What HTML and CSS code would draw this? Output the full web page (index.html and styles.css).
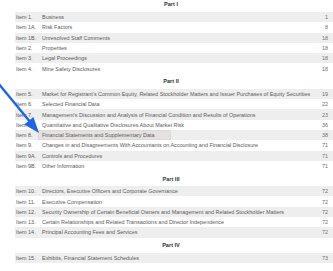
FILE: index.html
```html
<!DOCTYPE html>
<html>
<head>
<meta charset="utf-8">
<link rel="stylesheet" href="styles.css">
</head>
<body>
<div class="toc">
  <div class="part part-first">Part I</div>
  <div class="row odd"><span class="num">Item 1.</span><span class="title">Business</span><span class="page">1</span></div>
  <div class="row"><span class="num">Item 1A.</span><span class="title">Risk Factors</span><span class="page">8</span></div>
  <div class="row odd"><span class="num">Item 1B.</span><span class="title">Unresolved Staff Comments</span><span class="page">18</span></div>
  <div class="row"><span class="num">Item 2.</span><span class="title">Properties</span><span class="page">18</span></div>
  <div class="row odd"><span class="num">Item 3.</span><span class="title">Legal Proceedings</span><span class="page">18</span></div>
  <div class="row"><span class="num">Item 4.</span><span class="title">Mine Safety Disclosures</span><span class="page">18</span></div>

  <div class="part">Part II</div>
  <div class="row odd"><span class="num">Item 5.</span><span class="title">Market for Registrant’s Common Equity, Related Stockholder Matters and Issuer Purchases of Equity Securities</span><span class="page">19</span></div>
  <div class="row"><span class="num">Item 6.</span><span class="title">Selected Financial Data</span><span class="page">22</span></div>
  <div class="row odd"><span class="num">Item 7.</span><span class="title">Management’s Discussion and Analysis of Financial Condition and Results of Operations</span><span class="page">23</span></div>
  <div class="row"><span class="num">Item 7A.</span><span class="title">Quantitative and Qualitative Disclosures About Market Risk</span><span class="page">36</span></div>
  <div class="row odd"><span class="num">Item 8.</span><span class="title"><span class="hl">Financial Statements and Supplementary Data</span></span><span class="page">38</span></div>
  <div class="row"><span class="num">Item 9.</span><span class="title">Changes in and Disagreements With Accountants on Accounting and Financial Disclosure</span><span class="page">71</span></div>
  <div class="row odd"><span class="num">Item 9A.</span><span class="title">Controls and Procedures</span><span class="page">71</span></div>
  <div class="row"><span class="num">Item 9B.</span><span class="title">Other Information</span><span class="page">71</span></div>

  <div class="part">Part III</div>
  <div class="row odd"><span class="num">Item 10.</span><span class="title">Directors, Executive Officers and Corporate Governance</span><span class="page">72</span></div>
  <div class="row"><span class="num">Item 11.</span><span class="title">Executive Compensation</span><span class="page">72</span></div>
  <div class="row odd"><span class="num">Item 12.</span><span class="title">Security Ownership of Certain Beneficial Owners and Management and Related Stockholder Matters</span><span class="page">72</span></div>
  <div class="row"><span class="num">Item 13.</span><span class="title">Certain Relationships and Related Transactions and Director Independence</span><span class="page">72</span></div>
  <div class="row odd"><span class="num">Item 14.</span><span class="title">Principal Accounting Fees and Services</span><span class="page">72</span></div>

  <div class="part">Part IV</div>
  <div class="row odd"><span class="num">Item 15.</span><span class="title">Exhibits, Financial Statement Schedules</span><span class="page">73</span></div>
</div>
<svg class="arrow" width="60" height="60" viewBox="0 0 60 60">
  <line x1="-2" y1="1" x2="31" y2="41" stroke="#2166e0" stroke-width="2.4" stroke-linecap="round"/>
  <polygon points="39,51 24.2,42.5 33.4,34.9" fill="#2166e0"/>
</svg>
</body>
</html>
```
FILE: styles.css
```css
html, body {
  margin: 0;
  padding: 0;
  background: #ffffff;
}
body {
  position: relative;
  width: 333px;
  height: 271px;
  overflow: hidden;
  font-family: "Liberation Sans", Arial, sans-serif;
  font-size: 5.45px;
  color: #5a5a5a;
}
.toc {
  padding-left: 15px;
}
.part {
  height: 15px;
  display: flex;
  align-items: center;
  justify-content: center;
  padding-right: 6px;
  font-weight: bold;
  color: #333333;
  font-size: 5.6px;
}
.part-first {
  height: 12px;
  align-items: flex-start;
  padding-top: 1px;
  box-sizing: border-box;
}
.row {
  height: 10.3px;
  display: flex;
  align-items: center;
  white-space: nowrap;
  padding-right: 5px;
}
.row.odd {
  background: #eeeeee;
}
.num {
  width: 27px;
  flex: none;
  padding-left: 1px;
  box-sizing: border-box;
}
.title {
  flex: 1;
  align-self: stretch;
  display: flex;
  align-items: center;
}
.hl {
  align-self: stretch;
  display: flex;
  align-items: center;
  margin-left: -4px;
  padding: 0 16px 0 3px;
  background: #e2e2e2;
  border: 1px solid #ecd4d4;
}
.page {
  flex: none;
  color: #707070;
  text-align: right;
}
.arrow {
  position: absolute;
  left: 0;
  top: 82px;
}
```
